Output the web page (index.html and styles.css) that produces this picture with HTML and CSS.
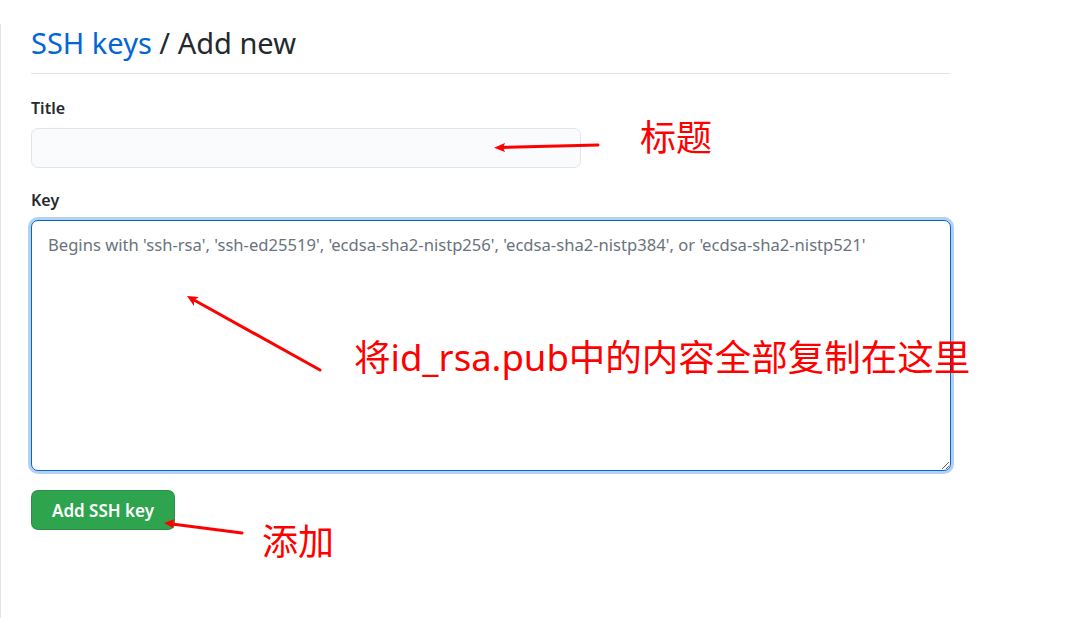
FILE: index.html
```html
<!DOCTYPE html>
<html lang="zh">
<head>
<meta charset="utf-8">
<title>SSH keys / Add new</title>
<link rel="stylesheet" href="styles.css">
</head>
<body>
<div class="page">
  <div class="content">
    <div class="subhead">
      <h2 class="subhead-heading"><a href="#" class="crumb">SSH keys</a> / Add new</h2>
    </div>
    <form class="form">
      <div class="form-group">
        <label class="form-label" for="title">Title</label>
        <input class="input-title" id="title" type="text">
      </div>
      <div class="form-group">
        <label class="form-label" for="key">Key</label>
        <textarea class="input-key" id="key" placeholder="Begins with 'ssh-rsa', 'ssh-ed25519', 'ecdsa-sha2-nistp256', 'ecdsa-sha2-nistp384', or 'ecdsa-sha2-nistp521'"></textarea>
      </div>
      <button type="button" class="btn-primary">Add SSH key</button>
    </form>
  </div>
</div>

<div class="note note-title">标题</div>
<div class="note note-key">将id_rsa.pub中的内容全部复制在这里</div>
<div class="note note-add">添加</div>

<svg class="arrows" width="1088" height="618" viewBox="0 0 1088 618">
  <g stroke="#ff0000" stroke-width="3" stroke-linecap="round" fill="none">
    <line x1="598" y1="145" x2="502" y2="147.5"/>
    <line x1="320" y1="370" x2="194" y2="300"/>
    <line x1="242" y1="533" x2="172" y2="524"/>
  </g>
  <g fill="#ff0000">
    <polygon points="494,147.7 505,143 503,147.5 505,152"/>
    <polygon points="187,296 199,297 194,300 194,306"/>
    <polygon points="164,523 175,519 172,524 174,528.5"/>
  </g>
</svg>
</body>
</html>
```

FILE: styles.css
```css
html, body {
  margin: 0;
  padding: 0;
  background: #ffffff;
}

body {
  font-family: "Noto Sans", "Open Sans", "Liberation Sans", sans-serif;
  color: #24292e;
  width: 1088px;
  height: 618px;
  overflow: hidden;
  position: relative;
}

.page {
  margin-top: 24px;
  height: 594px;
  border-left: 1px solid #e1e4e8;
  padding-left: 30px;
  box-sizing: border-box;
}

.content {
  width: 919px;
}

.subhead {
  border-bottom: 1px solid #e1e4e8;
  padding-bottom: 12px;
}

.subhead-heading {
  margin: 0;
  font-size: 29px;
  font-weight: 400;
  line-height: 37px;
  color: #24292e;
}

.crumb {
  color: #0366d6;
  text-decoration: none;
}

.form {
  display: flex;
  flex-direction: column;
  align-items: flex-start;
}

.form-group {
  display: flex;
  flex-direction: column;
  align-items: flex-start;
  width: 100%;
}

.form-group:first-child {
  margin-top: 24px;
}

.form-group + .form-group {
  margin-top: 22px;
}

.form-label {
  font-size: 16px;
  font-weight: 600;
  line-height: 20px;
  margin-bottom: 10px;
}

.input-title {
  width: 550px;
  height: 40px;
  box-sizing: border-box;
  background: #fafbfc;
  border: 1px solid #e1e4e8;
  border-radius: 7px;
  margin: 0;
  padding: 6px 15px;
  font: inherit;
  font-size: 17px;
  outline: none;
}

.input-key {
  width: 920px;
  height: 251px;
  box-sizing: border-box;
  background: #ffffff;
  border: 1px solid #0366d6;
  border-radius: 7px;
  box-shadow: 0 0 0 3px rgba(3, 102, 214, 0.3);
  margin: 0;
  padding: 12px 16px;
  font-family: "Noto Sans", "Open Sans", "Liberation Sans", sans-serif;
  font-size: 16.6px;
  line-height: 24px;
  color: #24292e;
  outline: none;
  resize: vertical;
}

.input-key::placeholder {
  color: #6a737d;
}

.btn-primary {
  margin-top: 19px;
  width: 144px;
  height: 40px;
  box-sizing: border-box;
  background: #2ea44f;
  border: 1px solid rgba(27, 31, 35, 0.15);
  border-radius: 7px;
  color: #ffffff;
  font-family: "Noto Sans", "Open Sans", "Liberation Sans", sans-serif;
  font-size: 17px;
  font-weight: 600;
  padding: 0;
  cursor: pointer;
}

.note {
  position: absolute;
  color: #ff0000;
  font-family: "Noto Sans CJK SC", "Noto Sans", sans-serif;
  font-size: 36px;
  line-height: 40px;
  white-space: nowrap;
}

.note-title {
  left: 640px;
  top: 115px;
}

.note-key {
  left: 354px;
  top: 337px;
  font-size: 36.5px;
  font-family: "Noto Sans", "Noto Sans CJK SC", sans-serif;
}

.note-add {
  left: 262px;
  top: 519px;
}

.arrows {
  position: absolute;
  left: 0;
  top: 0;
  pointer-events: none;
}
```
